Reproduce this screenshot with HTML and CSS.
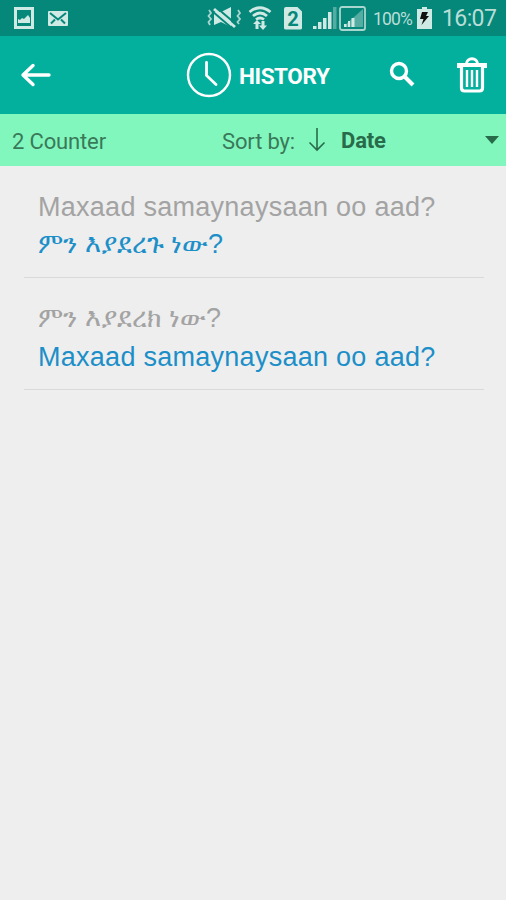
FILE: index.html
```html
<!DOCTYPE html>
<html lang="so">
<head>
    <meta charset="UTF-8">
    <title>History</title>
    <link rel="stylesheet" href="styles.css">
</head>
<body>
<div id="status">
    <svg class="picture" width="20" height="22" viewBox="0 0 20 22">
        <path fill="#cfe9e4" fill-rule="evenodd" d="M0 0H20V22H0ZM3 3V19H17V3Z"/>
        <path fill="#cfe9e4" d="M4 16V12L6 13L8 11L10 12L14 8L16 11V16Z"/>
    </svg>
    <svg class="mail" width="20" height="15" viewBox="0 0 20 15">
        <rect width="20" height="15" rx="1" fill="#cfe9e4"/>
        <path d="M2 2L10 8.5L18 2M3 12.5L7 8.5M17 12.5L13 8.5" fill="none" stroke="#05877a" stroke-width="2"/>
    </svg>
    <svg class="mute" width="34" height="22" viewBox="0 0 34 22">
        <path fill="#cfe9e4" d="M7 5H14L24 0V20L14 15L7 18Z"/>
        <path d="M5 4L26 22" stroke="#05877a" stroke-width="2"/>
        <path d="M10 1L30 18" stroke="#05877a" stroke-width="2"/>
        <path d="M7 2L28 20" stroke="#cfe9e4" stroke-width="2.800"/>
        <path d="M2 3L4 6L1.500 9L4 12L1.500 15L3 18M31 3L33 6L30.500 9L33 12L30.500 15L32 17" fill="none" stroke="#a9d6cf" stroke-width="1.800"/>
    </svg>
    <svg class="wifi" width="24" height="24" viewBox="0 0 24 24">
        <g fill="none" stroke="#cfe9e4" stroke-width="2.800">
            <path d="M1.500 6Q12 -2.500 22.500 6"/>
            <path d="M5 10Q12 4 19 10"/>
            <path d="M8 13.500Q12 10.500 16 13.500"/>
        </g>
        <path fill="#cfe9e4" d="M9 14L13 18H10.500V23H7.500V18H5ZM15 24L11 19.500H13.500V15H16.500V19.500H19Z"/>
    </svg>
    <div class="sim">2</div>
    <svg class="signal" width="25" height="22" viewBox="0 0 25 22">
        <path fill="#cfe9e4" d="M0 19H3.500V22H0ZM5 15H8.500V22H5ZM10 11H13.500V22H10ZM15 5H18.500V22H15Z"/>
        <path fill="#55aca2" d="M20 0H23.500V22H20Z"/>
    </svg>
    <svg class="signal2" width="27" height="25" viewBox="0 0 27 25">
        <rect x="1" y="1" width="25" height="23" rx="2" fill="none" stroke="#a9d6cf" stroke-width="1.800"/>
        <path fill="#55aca2" d="M24 3V21H5V20Z"/>
        <path fill="#cfe9e4" d="M5 18H7.500V21H5ZM9 15H11V21H9ZM12.500 12H15.500V21H12.500Z"/>
    </svg>
    <span class="percent">100%</span>
    <svg class="battery" width="15" height="22" viewBox="0 0 15 22">
        <path fill="#cfe9e4" d="M5 0H10V2H15V22H0V2H5Z"/>
        <path fill="#111" d="M5 5H11L9 9H12L4.500 18L6.500 12H3Z"/>
    </svg>
    <span class="time">16:07</span>
</div>
<div id="toolbar">
    <svg class="back" width="32" height="24" viewBox="0 0 32 24">
        <path d="M13 2.500L3 12L13 21.500M3 12H29" fill="none" stroke="#fff" stroke-width="3.400" stroke-linecap="round" stroke-linejoin="round"/>
    </svg>
    <svg class="clock" width="46" height="46" viewBox="0 0 46 46">
        <circle cx="23" cy="23" r="21" fill="none" stroke="#fff" stroke-width="2.400"/>
        <path d="M20.500 10.500V23.500L30 32.500" fill="none" stroke="#fff" stroke-width="2.800" stroke-linecap="round"/>
    </svg>
    <h1>HISTORY</h1>
    <svg class="search" width="28" height="28" viewBox="0 0 28 28">
        <circle cx="11" cy="10" r="7.500" fill="none" stroke="#fff" stroke-width="3.400"/>
        <path d="M16.500 15.500L25 24" stroke="#fff" stroke-width="4"/>
    </svg>
    <svg class="trash" width="30" height="38" viewBox="0 0 30 38">
        <g fill="none" stroke="#fff">
            <path d="M9.500 8C9.500 1 20.500 1 20.500 8" stroke-width="3"/>
            <path d="M1.500 12V9H28.500V12" stroke-width="4"/>
            <path d="M4.500 10V32Q4.500 35 7.500 35H22.500Q25.500 35 25.500 32V10" stroke-width="3.200"/>
            <path d="M10 14V31M15 14V31M20 14V31" stroke-width="2.400"/>
        </g>
    </svg>
</div>
<div id="sort">
    <span class="counter">2 Counter</span>
    <span class="by">Sort by:</span>
    <svg class="down" width="18" height="24" viewBox="0 0 18 24">
        <path d="M9 0V22M1.500 14.500L9 22L16.500 14.500" fill="none" stroke="#286b4b" stroke-width="1.600"/>
    </svg>
    <span class="date">Date</span>
    <span class="arrow"></span>
</div>
<ul id="list">
    <li>
        <p class="from">Maxaad samaynaysaan oo aad?</p>
        <p class="to am">ምን እያደረጉ ነው?</p>
    </li>
    <li>
        <p class="from am">ምን እያደረክ ነው?</p>
        <p class="to">Maxaad samaynaysaan oo aad?</p>
    </li>
</ul>
</body>
</html>
```
FILE: styles.css
```css
*{
    padding: 0;
    margin: 0;
    list-style: none;
    box-sizing: border-box;
}
body{
    background-color: #eee;
    font-family: Roboto, "Liberation Sans", sans-serif;
}
svg{
    display: block;
    flex: none;
}
#status{
    height: 36px;
    display: flex;
    align-items: center;
    padding-left: 14px;
    background-color: #05877a;
    color: #b9ddd7;
    white-space: nowrap;
}
.mail{
    margin-left: 14px;
}
.mute{
    margin-left: 139px;
}
.wifi{
    margin-left: 7px;
}
.sim{
    width: 18px;
    height: 23px;
    margin-left: 12px;
    border-radius: 2px;
    background-color: #cfe9e4;
    clip-path: polygon(0 0, 72% 0, 100% 22%, 100% 100%, 0 100%);
    color: #05877a;
    font-size: 20px;
    font-weight: 700;
    line-height: 24px;
    text-align: center;
}
.signal{
    margin-left: 11px;
}
.signal2{
    margin-left: 1px;
}
.percent{
    width: 38px;
    margin-left: 7px;
    padding-top: 1px;
    font-size: 17.500px;
    letter-spacing: -.8px;
}
.battery{
    margin-left: 6px;
}
.time{
    margin-left: 10px;
    padding-top: 1px;
    font-size: 23px;
    letter-spacing: -.6px;
}
#toolbar{
    height: 78px;
    display: flex;
    align-items: center;
    padding-left: 20px;
    background-color: #03b09e;
}
.clock{
    margin-left: 134px;
}
#toolbar h1{
    width: 92px;
    margin-left: 7px;
    color: #fff;
    font-size: 22.500px;
    font-weight: 700;
    line-height: 30px;
    letter-spacing: -.4px;
    padding-top: 2px;
}
.search{
    margin-left: 57px;
}
.trash{
    margin-left: 41px;
}
#sort{
    height: 52px;
    display: flex;
    align-items: center;
    padding: 0 7px 0 12px;
    background-color: #82f7bd;
    color: #39795a;
    font-size: 22px;
    letter-spacing: -.15px;
    white-space: nowrap;
}
.counter{
    width: 210px;
    padding-top: 2px;
}
.by{
    width: 77px;
    padding-top: 2px;
}
.down{
    margin-left: 9px;
}
.date{
    margin: 0 auto 0 15px;
    color: #286b4b;
    font-weight: 700;
}
.arrow{
    border: 7px solid transparent;
    border-top: 8px solid #286b4b;
    border-bottom: 0;
}
#list{
    padding: 0 22px 0 24px;
}
#list li{
    height: 112px;
    padding: 22px 0 0 14px;
    border-bottom: 1px solid #d9d9d9;
}
#list p{
    height: 38px;
    font-family: "Liberation Sans", sans-serif;
    font-size: 27px;
    line-height: 38px;
    letter-spacing: .27px;
    white-space: nowrap;
}
#list .am{
    letter-spacing: 0;
    line-height: 36px;
}
.from{
    color: #a3a3a3;
}
.to{
    color: #1c8fc8;
}
```
